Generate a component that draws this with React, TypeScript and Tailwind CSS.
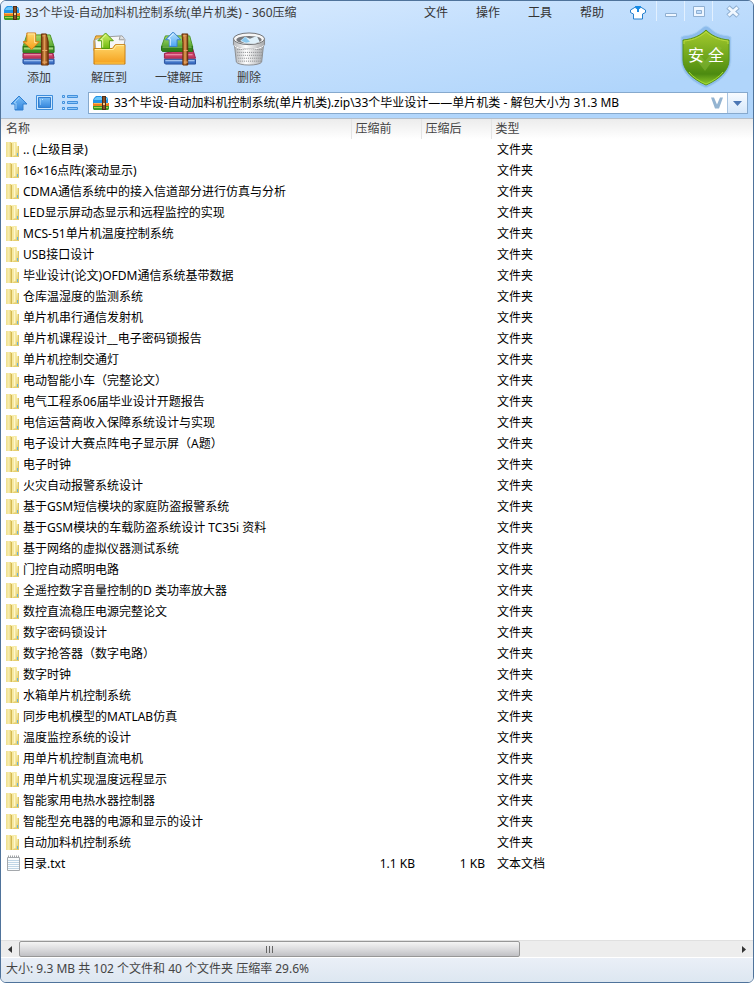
import type { ReactNode } from "react";

const folders = [
  ".. (上级目录)",
  "16×16点阵(滚动显示)",
  "CDMA通信系统中的接入信道部分进行仿真与分析",
  "LED显示屏动态显示和远程监控的实现",
  "MCS-51单片机温度控制系统",
  "USB接口设计",
  "毕业设计(论文)OFDM通信系统基带数据",
  "仓库温湿度的监测系统",
  "单片机串行通信发射机",
  "单片机课程设计__电子密码锁报告",
  "单片机控制交通灯",
  "电动智能小车（完整论文）",
  "电气工程系06届毕业设计开题报告",
  "电信运营商收入保障系统设计与实现",
  "电子设计大赛点阵电子显示屏（A题）",
  "电子时钟",
  "火灾自动报警系统设计",
  "基于GSM短信模块的家庭防盗报警系统",
  "基于GSM模块的车载防盗系统设计 TC35i 资料",
  "基于网络的虚拟仪器测试系统",
  "门控自动照明电路",
  "全遥控数字音量控制的D 类功率放大器",
  "数控直流稳压电源完整论文",
  "数字密码锁设计",
  "数字抢答器（数字电路）",
  "数字时钟",
  "水箱单片机控制系统",
  "同步电机模型的MATLAB仿真",
  "温度监控系统的设计",
  "用单片机控制直流电机",
  "用单片机实现温度远程显示",
  "智能家用电热水器控制器",
  "智能型充电器的电源和显示的设计",
  "自动加料机控制系统",
];

const files = [
  ...folders.map((name) => ({ name, packed: "", size: "", type: "文件夹", folder: true })),
  { name: "目录.txt", packed: "1.1 KB", size: "1 KB", type: "文本文档", folder: false },
];

// Shared gradients, referenced by id from the icons below
function Defs() {
  return (
    <svg width="0" height="0" className="absolute" aria-hidden="true">
      <defs>
        <linearGradient id="green" x1="0" y1="0" x2="0" y2="1">
          <stop offset="0" stopColor="#a5d867" />
          <stop offset="1" stopColor="#58a832" />
        </linearGradient>
        <linearGradient id="orange" x1="0" y1="0" x2="0" y2="1">
          <stop offset="0" stopColor="#ffd76b" />
          <stop offset="1" stopColor="#f5a01c" />
        </linearGradient>
        <linearGradient id="belt" x1="0" y1="0" x2="1" y2="0">
          <stop offset="0" stopColor="#7b3c0c" />
          <stop offset="0.45" stopColor="#d58b45" />
          <stop offset="1" stopColor="#6d3208" />
        </linearGradient>
        <linearGradient id="sky" x1="0" y1="0" x2="0" y2="1">
          <stop offset="0" stopColor="#b9e2ff" />
          <stop offset="1" stopColor="#4ba4f4" />
        </linearGradient>
        <linearGradient id="nav" x1="0" y1="0" x2="0" y2="1">
          <stop offset="0" stopColor="#78bdf8" />
          <stop offset="1" stopColor="#3586dc" />
        </linearGradient>
        <linearGradient id="lime" x1="0" y1="0" x2="0" y2="1">
          <stop offset="0" stopColor="#d3f26a" />
          <stop offset="1" stopColor="#6cb80d" />
        </linearGradient>
        <linearGradient id="basket" x1="0" y1="0" x2="1" y2="0">
          <stop offset="0" stopColor="#b4b6b9" />
          <stop offset="0.4" stopColor="#ffffff" />
          <stop offset="1" stopColor="#a6a8ab" />
        </linearGradient>
        <linearGradient id="shield" x1="0" y1="0" x2="0" y2="1">
          <stop offset="0" stopColor="#a6ca2e" />
          <stop offset="0.5" stopColor="#6ea51c" />
          <stop offset="0.8" stopColor="#4c8a10" />
          <stop offset="1" stopColor="#8fca2c" />
        </linearGradient>
        <linearGradient id="folder" x1="0" y1="0" x2="1" y2="0">
          <stop offset="0" stopColor="#efdf8c" />
          <stop offset="0.6" stopColor="#f8eeb0" />
          <stop offset="1" stopColor="#e0c867" />
        </linearGradient>
        <linearGradient id="folderBack" x1="0" y1="0" x2="0" y2="1">
          <stop offset="0" stopColor="#faf1b8" />
          <stop offset="1" stopColor="#e6cf6e" />
        </linearGradient>
      </defs>
    </svg>
  );
}

function ArchiveLogo() {
  return (
    <svg width="16" height="16" viewBox="0 0 16 16" className="shrink-0" aria-hidden="true">
      <path d="M1 3l2-2h5l1 1h5l1 2v4H0V5z" fill="#2493e4" />
      <path d="M2 3l2-1h4l1 1h5v2H1z" fill="#6cc7fa" />
      <path d="M0 8h16v3H0z" fill="#ee7f1c" />
      <path d="M1 8h14v1H1z" fill="#ffb452" />
      <path d="M0 11h16v3l-1 1H1l-1-1z" fill="#3f9a24" />
      <path d="M1 12h14v1H1z" fill="#a4d84c" />
      <path d="M9 1h4v14H9z" fill="#4f2c14" />
      <path d="M10 2h2v12h-2z" fill="#8a5128" />
      <path d="M10 8h2v2h-2z" fill="#f2d08a" />
    </svg>
  );
}

function AddIcon() {
  return (
    <svg width="34" height="34" viewBox="1 0 35 35" aria-hidden="true">
      <path d="M2 28h32v5H3l-1-1z" fill="#3f72c6" stroke="#28519c" />
      <path d="M3 29h30v1H3z" fill="#b6d2f8" />
      <path d="M2 22h31l1 5H2z" fill="#c73b63" stroke="#96234a" />
      <path d="M3 23h29v1H3z" fill="#f3a4b9" />
      <path d="M6 3h24l4 12H2z" fill="url(#green)" stroke="#4a9427" />
      <path d="M2 15h32v6H2z" fill="#3e8d23" stroke="#2c7517" />
      <path d="M3 16h30v2H3z" fill="#a3d77a" />
      <path d="M21 2h5l2 8v24h-7V10z" fill="url(#belt)" stroke="#693209" />
      <path d="M22 4h3M22 19h5M22 31h5" stroke="#efb275" />
      <path d="M24 5v28" stroke="#e0a15f" />
      <path d="M6 1h9v9h4l-8 8-9-8h4z" fill="url(#orange)" stroke="#d47b17" />
      <path d="M7 2h7v9h2" fill="none" stroke="#ffe9a6" />
    </svg>
  );
}

function ExtractToIcon() {
  return (
    <svg width="34" height="34" viewBox="0 0 35 35" aria-hidden="true">
      <path d="M2 9l2-5h7l2 3h17v12H2z" fill="#f3bc4c" stroke="#bd7e1b" />
      <path d="M3 8l13-4 2 15H4z" fill="#fbfbfb" stroke="#a7a7a7" />
      <path d="M15 5l16-1 3 4-2 12H16z" fill="#f6f6f6" stroke="#9b9b9b" />
      <path d="M29 4l-1 4h5" fill="#d9dcdf" stroke="#9b9b9b" />
      <path d="M2 17h19l3-4h10v20H2z" fill="url(#orange)" stroke="#c77f12" />
      <path d="M3 18h19l3-4h8" fill="none" stroke="#fff0a6" />
      <path d="M3 32h30" stroke="#ffcc50" />
      <path d="M14 1l8 8h-4v8h-8V9H6z" fill="url(#lime)" stroke="#4f9a0c" />
      <path d="M14 3l-5 5h2v8" fill="none" stroke="#edfbaa" />
    </svg>
  );
}

function OneClickIcon() {
  return (
    <svg width="36" height="34" viewBox="0 0 36 35" aria-hidden="true">
      <path d="M3 28h32v5H4l-1-1z" fill="#3f72c6" stroke="#28519c" />
      <path d="M4 29h30v1H4z" fill="#c0daf9" />
      <path d="M29 16l3 1 3 10H3v-5z" fill="#c73b63" stroke="#96234a" />
      <path d="M4 23h28v1H4z" fill="#f3a4b9" />
      <path d="M4 4h25l3 11H0z" fill="url(#green)" stroke="#4a9427" />
      <path d="M0 15h32v5H1l-1-1z" fill="#32811b" stroke="#256c13" />
      <path d="M1 15h30v1H1z" fill="#9ed475" />
      <path d="M21 2h6v32h-5V11z" fill="url(#belt)" stroke="#693209" />
      <path d="M22 4h4M23 19h4M23 31h4" stroke="#efb275" />
      <path d="M25 5v28" stroke="#dc9d5d" />
      <path d="M12 0l8 8h-4v7H8V8H4z" fill="url(#sky)" stroke="#397fc9" />
      <path d="M12 2L7 7h2v7" fill="none" stroke="#e5f5ff" />
    </svg>
  );
}

function DeleteIcon() {
  return (
    <svg width="34" height="34" viewBox="1 0 34 35" aria-hidden="true">
      <path d="M3 13h30l-2 18c-2 4-24 4-26 0z" fill="url(#basket)" stroke="#8a8c8f" />
      <path
        d="M6 18h25M6 21h25M6 24h25M7 27h23M7 30h23"
        stroke="#85878a"
        strokeWidth="1"
        strokeDasharray="1 1"
      />
      <path d="M2 7v6c2 6 30 6 32 0V7z" fill="url(#basket)" stroke="#85878a" />
      <ellipse cx="18" cy="7" rx="16" ry="6" fill="#f5f5f5" stroke="#707275" />
      <ellipse cx="18" cy="8" rx="13" ry="4" fill="#77797d" />
      <path d="M9 9l5-4 5 2 7-3 3 6c-5 3-16 3-20-1z" fill="#dff0fa" />
      <path d="M10 9l4-4 5 5-4 1z" fill="#8bc8ed" />
      <path d="M3 14c4 5 26 5 30 0" fill="none" stroke="#fff" />
    </svg>
  );
}

function UpIcon() {
  return (
    <svg width="18" height="16" viewBox="0 0 18 16" aria-hidden="true">
      <path d="M9 1l8 8h-4v6H5V9H1z" fill="url(#nav)" stroke="#3380d0" />
      <path d="M9 3L4 8h2v6" fill="none" stroke="#9dd0fa" />
    </svg>
  );
}

function IconsViewIcon() {
  return (
    <svg width="18" height="16" viewBox="0 0 18 16" aria-hidden="true">
      <path d="M.5.5h16v14H.5z" fill="#cce6fd" stroke="#3e8edc" />
      <path d="M2.500 2.500h12v10h-12z" fill="url(#nav)" stroke="#327dcd" />
      <path d="M4 5h1M4 7h1M4 9h1M6 4.500h1" stroke="#c3e4ff" />
    </svg>
  );
}

function ListViewIcon() {
  return (
    <svg width="16" height="16" viewBox="0 0 16 16" aria-hidden="true">
      <path d="M.5.5h2v2h-2zM.5 6.500h2v2h-2zM.5 12.500h2v2h-2z" fill="#b9defd" stroke="#4290dc" />
      <path d="M5.500.5h10v2h-10zM5.500 6.500h10v2h-10zM5.500 12.500h10v2h-10z" fill="#91c7f8" stroke="#4290dc" />
    </svg>
  );
}

function ShirtIcon() {
  return (
    <svg width="16" height="14" viewBox="0 0 16 14" aria-hidden="true">
      <path d="M5.500 1L.5 4v2.500l3 1.500v5h9V8l3-1.500V4l-5-3c-1 2-4 2-5 0z" fill="#fff" stroke="#2780cc" />
      <path d="M5 0h6c0 2-1 3-2 3v3H7V3C6 3 5 2 5 0z" fill="#168ae5" />
    </svg>
  );
}

function ShieldIcon() {
  return (
    <svg width="54" height="64" viewBox="0 0 54 64" aria-hidden="true">
      <path
        d="M27 1c3 0 7 6 13 8 5 2 9 1 12 3v23c0 14-13 23-25 28C15 58 2 49 2 35V12c3-2 7-1 12-3 6-2 10-8 13-8z"
        fill="#8dbcec"
        stroke="#a9cff4"
      />
      <path
        d="M27 5c5 5 12 9 23 10v20c0 10-9 19-23 25C13 54 4 45 4 35V15C15 14 22 10 27 5z"
        fill="url(#shield)"
        stroke="#579218"
      />
      <path d="M5 19v-3c11-1 17-5 22-9 5 4 11 8 22 9v3" fill="none" stroke="#b9d93f" />
      <path d="M16 33l5-3 5 6 13-15 4 2-17 23z" fill="#8fc040" opacity="0.45" />
      <path d="M10 47c4 5 10 9 17 12 7-3 13-7 17-12" fill="none" stroke="#a4dc33" />
    </svg>
  );
}

function FolderIcon() {
  return (
    <svg width="14" height="17" viewBox="0 0 14 17" className="shrink-0" aria-hidden="true">
      <path d="M5 1h6v4h2v11H5z" fill="url(#folderBack)" />
      <path d="M12 5h1v11h-1z" fill="#dcc56a" />
      <path d="M0 1h5v15H0z" fill="url(#folder)" />
      <path d="M5 2h3v13l-3 1z" fill="#d3b850" />
      <path d="M6 2l4-1v13l-4 2z" fill="#f6e8a0" />
      <path d="M8 2h1v12H8z" fill="#fdf7cf" />
      <path d="M11 12h1v3h-1z" fill="#6cb6d9" />
    </svg>
  );
}

function TextFileIcon() {
  return (
    <svg width="14" height="17" viewBox="0 0 14 17" className="shrink-0" aria-hidden="true">
      <path d="M1.500 2.500h12v13h-12z" fill="#fafcfd" stroke="#a4a8ac" />
      <path d="M2 5.500h11M2 7.500h11M2 9.500h11M2 11.500h11M2 13.500h11" stroke="#c0d6e6" />
      <path d="M2 1.500h12" stroke="#a0a3a6" strokeWidth="2" strokeDasharray="1 1" />
    </svg>
  );
}

function ToolButton({ label, children }: { label: string; children: ReactNode }) {
  return (
    <button type="button" className="flex w-[70px] flex-col items-center gap-1 text-[#3c3c3c]">
      {children}
      <span className="leading-4">{label}</span>
    </button>
  );
}

export default function App() {
  return (
    <div className="flex min-h-screen w-full flex-col overflow-hidden rounded-md border border-[#4f739b] bg-white font-['Noto_Sans','Noto_Sans_CJK_SC',sans-serif] text-[12px] leading-5 text-black">
      <Defs />

      <header className="bg-linear-170 from-[#e3f0ff] via-[#c3dffd] via-45% to-[#b0d5fb] to-80%">
        {/* Title bar */}
        <div className="flex h-6 items-center justify-between">
          <div className="flex items-center gap-[5px] pl-[3px]">
            <ArchiveLogo />
            <h1 className="whitespace-nowrap text-[#3c3c3c]">33个毕设-自动加料机控制系统(单片机类) - 360压缩</h1>
          </div>
          <div className="flex h-full items-center">
            <nav className="flex gap-7 text-[#333]">
              {["文件", "操作", "工具", "帮助"].map((item) => (
                <button key={item} type="button">{item}</button>
              ))}
            </nav>
            <button type="button" aria-label="换肤" className="mr-2.5 ml-[26px]">
              <ShirtIcon />
            </button>
            <button type="button" aria-label="最小化" className="flex h-5 w-7 items-center justify-center self-start border-l border-[#e2f0ff]">
              <svg width="12" height="12" viewBox="0 0 12 12">
                <path d="M.5 8.500h11v3H.5z" fill="#eef6ff" stroke="#8fafd1" />
              </svg>
            </button>
            <button type="button" aria-label="最大化" className="flex h-5 w-7 items-center justify-center self-start border-l border-[#e2f0ff]">
              <svg width="12" height="12" viewBox="0 0 12 12">
                <path d="M.5 1.500h11v10H.5zM3.500 5.500h5v3h-5z" fill="#eef6ff" fillRule="evenodd" stroke="#8fafd1" />
              </svg>
            </button>
            <button type="button" aria-label="关闭" className="flex h-5 w-[41px] items-center justify-center self-start border-l border-[#e2f0ff]">
              <svg width="14" height="14" viewBox="0 0 14 14">
                <path d="M2 3l10 9M12 3L2 12" stroke="#8fafd1" strokeWidth="5" />
                <path d="M2.500 3.500l9 8M11.500 3.500l-9 8" stroke="#f1f8ff" strokeWidth="3" />
              </svg>
            </button>
          </div>
        </div>

        {/* Toolbar */}
        <div className="flex items-start justify-between pr-5">
          <div className="flex pt-[7px] pl-[3px]">
            <ToolButton label="添加"><AddIcon /></ToolButton>
            <ToolButton label="解压到"><ExtractToIcon /></ToolButton>
            <ToolButton label="一键解压"><OneClickIcon /></ToolButton>
            <ToolButton label="删除"><DeleteIcon /></ToolButton>
          </div>
          <button type="button" className="relative h-16 w-[54px]">
            <ShieldIcon />
            <span className="absolute inset-x-0 top-5 text-center text-base leading-5 whitespace-nowrap text-white">安 全</span>
          </button>
        </div>

        {/* Address bar */}
        <div className="flex items-center pt-[3px] pr-[5px] pb-1 pl-[9px]">
          <div className="flex w-[78px] gap-2">
            <button type="button" aria-label="向上"><UpIcon /></button>
            <button type="button" aria-label="图标视图"><IconsViewIcon /></button>
            <button type="button" aria-label="列表视图"><ListViewIcon /></button>
          </div>
          <div className="flex h-[22px] min-w-0 flex-1 items-center border border-[#86a9cd] bg-white pl-1">
            <ArchiveLogo />
            <input
              type="text"
              aria-label="路径"
              className="min-w-0 flex-1 pl-[5px] leading-5 outline-none"
              defaultValue="33个毕设-自动加料机控制系统(单片机类).zip\33个毕业设计——单片机类 - 解包大小为 31.3 MB"
            />
            <svg width="14" height="12" viewBox="0 0 14 12" className="mr-[3px] shrink-0" aria-hidden="true">
              <path d="M1 .5h3l3 7 3-7h3L9 11.500H5z" fill="#94b4d1" />
            </svg>
            <button type="button" aria-label="历史路径" className="flex h-5 w-5 items-center justify-center border-l border-[#a9c4e0] bg-linear-to-b from-[#f7fbff] to-[#d5e7fa]">
              <svg width="9" height="5" viewBox="0 0 9 5"><path d="M0 0h9L4.500 5z" fill="#4b76b4" /></svg>
            </button>
          </div>
        </div>
      </header>

      {/* File list */}
      <main className="flex-1 border-t border-[#b5bfca]">
        <table className="w-full table-fixed border-collapse text-left">
          <colgroup>
            <col className="w-[350px]" />
            <col className="w-[70px]" />
            <col className="w-[70px]" />
            <col />
          </colgroup>
          <thead>
            <tr className="h-5 bg-linear-to-b from-[#ececec] to-white text-[#444]">
              <th className="p-0 pl-[5px] font-normal">名称</th>
              <th className="border-l border-[#e4e4e4] p-0 pl-1 font-normal">压缩前</th>
              <th className="border-l border-[#e4e4e4] p-0 pl-1 font-normal">压缩后</th>
              <th className="border-l border-[#e4e4e4] p-0 pl-1 font-normal">类型</th>
            </tr>
          </thead>
          <tbody>
            {files.map((file) => (
              <tr key={file.name} className="h-[21px]">
                <td className="p-0 pl-[5px]">
                  <div className="flex items-center gap-[3px] whitespace-nowrap">
                    {file.folder ? <FolderIcon /> : <TextFileIcon />}
                    {file.name}
                  </div>
                </td>
                <td className="p-0 pr-1.5 text-right">{file.packed}</td>
                <td className="p-0 pr-1.5 text-right">{file.size}</td>
                <td className="p-0 pl-1.5">{file.type}</td>
              </tr>
            ))}
          </tbody>
        </table>
      </main>

      {/* Horizontal scrollbar */}
      <div className="flex h-[17px] border-t border-[#e0e0e0] bg-[#ededed]">
        <button type="button" aria-label="向左滚动" className="flex w-[18px] shrink-0 items-center justify-center">
          <svg width="4" height="7" viewBox="0 0 4 7"><path d="M4 0v7L0 3.500z" fill="#333" /></svg>
        </button>
        <div className="flex-1">
          <div className="flex h-4 w-[70%] items-center justify-center rounded-xs border border-[#979797] bg-linear-to-b from-[#f4f4f4] via-[#dcdcde] via-50% to-[#c0c0c4]">
            <svg width="9" height="7" viewBox="0 0 9 7" aria-hidden="true">
              <path d="M1.500 0v7M4.500 0v7M7.500 0v7" stroke="#666" />
            </svg>
          </div>
        </div>
        <button type="button" aria-label="向右滚动" className="flex w-[18px] shrink-0 items-center justify-center">
          <svg width="4" height="7" viewBox="0 0 4 7"><path d="M0 0v7l4-3.500z" fill="#333" /></svg>
        </button>
      </div>

      <footer className="border-t border-white bg-linear-to-b from-[#eaeff7] to-[#dde7f1] px-[5px] pt-px pb-[3px] text-[#444]">
        大小: 9.3 MB 共 102 个文件和 40 个文件夹 压缩率 29.6%
      </footer>
    </div>
  );
}
